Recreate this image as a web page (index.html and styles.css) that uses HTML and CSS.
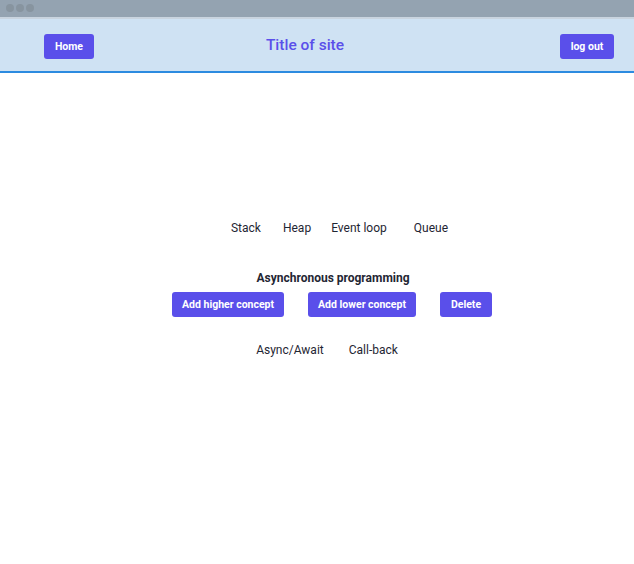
FILE: index.html
```html
<!DOCTYPE html>
<html>
<head>
<meta charset="utf-8">
<link rel="stylesheet" href="styles.css">
</head>
<body>
<div class="chrome">
  <span class="dot"></span><span class="dot"></span><span class="dot"></span>
</div>
<header class="header">
  <button class="btn nav-btn home">Home</button>
  <h1 class="title">Title of site</h1>
  <button class="btn nav-btn logout">log out</button>
</header>
<main class="main">
  <div class="row top-row">
    <span class="item stack">Stack</span>
    <span class="item heap">Heap</span>
    <span class="item event">Event loop</span>
    <span class="item queue">Queue</span>
  </div>
  <div class="concept">Asynchronous programming</div>
  <div class="actions">
    <button class="btn act-btn">Add higher concept</button>
    <button class="btn act-btn">Add lower concept</button>
    <button class="btn act-btn delete">Delete</button>
  </div>
  <div class="row bottom-row">
    <span class="item">Async/Await</span>
    <span class="item">Call-back</span>
  </div>
</main>
</body>
</html>
```
FILE: styles.css
```css
* { box-sizing: border-box; }
html, body { margin: 0; padding: 0; background: #fff; }
body {
  font-family: Roboto, "Liberation Sans", sans-serif;
  color: #1f2633;
  width: 634px;
  height: 564px;
  overflow: hidden;
}
.chrome {
  height: 19px;
  background: #94a3b1;
  border-bottom: 2px solid #c9d4df;
  display: flex;
  align-items: center;
  gap: 2px;
  padding: 0 0 2px 6px;
}
.dot {
  width: 8px;
  height: 8px;
  border-radius: 50%;
  background: #87949f;
}
.header {
  height: 54px;
  background: #cfe2f3;
  border-bottom: 2px solid #2c8be0;
  display: flex;
  align-items: center;
  justify-content: space-between;
  padding: 2px 20px 0 44px;
}
.btn {
  font-family: inherit;
  background: #5a4fea;
  color: #fff;
  border: none;
  border-radius: 3px;
  font-weight: 700;
  font-size: 10.5px;
  white-space: nowrap;
  cursor: pointer;
}
.nav-btn {
  height: 25px;
  padding: 0;
}
.home { width: 50px; }
.logout { width: 54px; }
.title {
  margin: 0 0 3px;
  font-size: 15.5px;
  font-weight: 500;
  color: #5a4fea;
  position: relative;
  left: -22px;
}
.main {
  display: flex;
  flex-direction: column;
  align-items: center;
}
.row {
  display: flex;
  font-size: 12px;
}
.top-row {
  margin-top: 148px;
  gap: 22px;
  padding-left: 45px;
}
.event { margin-left: -2px; }
.queue { margin-left: 5px; }
.concept {
  margin-top: 36px;
  font-size: 12px;
  font-weight: 700;
  padding-left: 32px;
}
.actions {
  margin-top: 7px;
  display: flex;
  gap: 24px;
  padding-left: 30px;
}
.act-btn {
  height: 25px;
  padding: 0 10px;
}
.delete { width: 52px; padding: 0; }
.bottom-row {
  margin-top: 26px;
  gap: 25px;
  padding-left: 20px;
}
```
